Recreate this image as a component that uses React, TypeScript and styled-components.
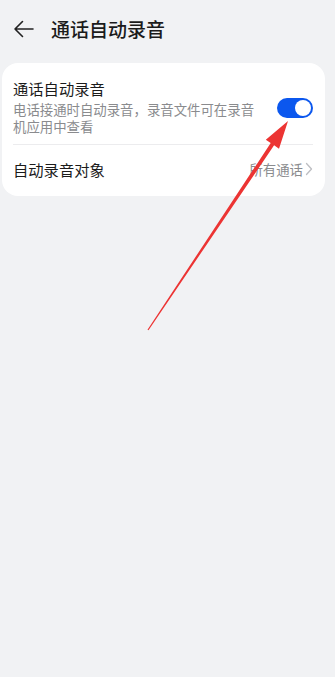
import React from "react";
import styled, { createGlobalStyle } from "styled-components";

const Global = createGlobalStyle`
  html, body { margin: 0; padding: 0; background: #f1f2f4; }
  body { font-family: "Noto Sans CJK SC", "Noto Sans", sans-serif; }
  * { box-sizing: border-box; }
`;

const Page = styled.div`
  position: relative;
  width: 335px;
  height: 677px;
  background: #f1f2f4;
  overflow: hidden;
`;

const Header = styled.div`
  height: 58px;
  display: flex;
  align-items: center;
  padding-left: 13px;
  gap: 17px;
`;

const Title = styled.div`
  font-size: 19px;
  color: #1b1b1b;
  font-weight: 500;
  line-height: 24px;
`;

const Card = styled.div`
  margin: 5px 10px 0 2px;
  background: #ffffff;
  border-radius: 16px;
  padding: 0 12px 0 11px;
`;

const Row = styled.div<{ $divider?: boolean; $pad?: string }>`
  display: flex;
  align-items: center;
  justify-content: space-between;
  padding: ${(p) => p.$pad || "0"};
  border-bottom: ${(p) => (p.$divider ? "1px solid #ececee" : "none")};
`;

const TextCol = styled.div`
  display: flex;
  flex-direction: column;
  gap: 2px;
`;

const RowTitle = styled.div`
  font-size: 15.3px;
  line-height: 22px;
  color: #1b1b1b;
`;

const RowSub = styled.div`
  font-size: 13.4px;
  line-height: 17px;
  color: #8a8b8e;
  width: 250px;
`;

const Toggle = styled.div`
  width: 36px;
  height: 20px;
  border-radius: 10px;
  background: #0b57ee;
  display: flex;
  align-items: center;
  justify-content: flex-end;
  padding-right: 2px;
  margin-top: 4px;
  flex-shrink: 0;
`;

const Knob = styled.div`
  width: 16px;
  height: 16px;
  border-radius: 50%;
  background: #ffffff;
`;

const Value = styled.div`
  display: flex;
  align-items: center;
  gap: 2px;
  font-size: 13.4px;
  color: #8a8b8e;
`;

const Overlay = styled.svg`
  position: absolute;
  left: 0;
  top: 0;
  pointer-events: none;
`;

export default function App() {
  return (
    <Page>
      <Global />
      <Header>
        <svg width="21" height="18" viewBox="0 0 21 18">
          <path d="M20 9H2M9.5 1.5L2 9l7.5 7.5" fill="none" stroke="#222" strokeWidth="1.6" strokeLinecap="round" strokeLinejoin="round" />
        </svg>
        <Title>通话自动录音</Title>
      </Header>
      <Card>
        <Row $divider $pad="14px 0 9px 0">
          <TextCol>
            <RowTitle>通话自动录音</RowTitle>
            <RowSub>电话接通时自动录音，录音文件可在录音机应用中查看</RowSub>
          </TextCol>
          <Toggle>
            <Knob />
          </Toggle>
        </Row>
        <Row $pad="0 0 3px 0" style={{ height: 51 }}>
          <RowTitle>自动录音对象</RowTitle>
          <Value>
            所有通话
            <svg width="8" height="14" viewBox="0 0 8 14">
              <path d="M1.5 1.5L6.5 7l-5 5.5" fill="none" stroke="#bdbec2" strokeWidth="1.3" strokeLinecap="round" strokeLinejoin="round" />
            </svg>
          </Value>
        </Row>
      </Card>
      <Overlay width="335" height="677" viewBox="0 0 335 677">
        <polygon
          points="147.5,329.7 270.7,143.1 265.8,139.7 288,121 279.0,148.7 274.1,145.3 148.5,330.3"
          fill="#ec3433"
        />
      </Overlay>
    </Page>
  );
}
